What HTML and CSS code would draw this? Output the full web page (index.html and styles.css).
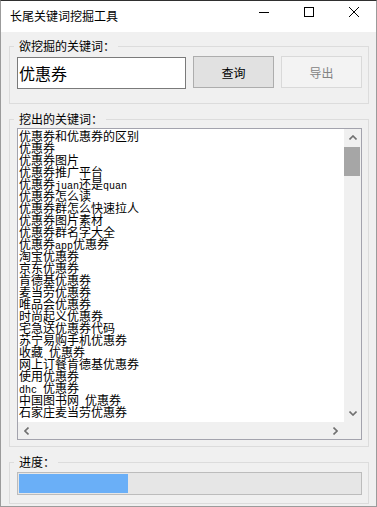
FILE: index.html
```html
<!DOCTYPE html>
<html lang="zh-CN">
<head>
    <meta charset="UTF-8">
    <meta name="viewport" content="width=device-width, initial-scale=1.0">
    <title>长尾关键词挖掘工具</title>
    <link rel="stylesheet" href="styles.css">
</head>
<body>
    <div class="window">
        <div class="titlebar">
            <span class="title">长尾关键词挖掘工具</span>
            <div class="controls">
                <span class="ctl">
                    <svg width="10" height="10" viewBox="0 0 10 10"><path d="M0 5.5 H10" stroke="#000" stroke-width="1"/></svg>
                </span>
                <span class="ctl">
                    <svg width="10" height="10" viewBox="0 0 10 10"><rect x="0.5" y="0.5" width="9" height="9" fill="none" stroke="#000" stroke-width="1"/></svg>
                </span>
                <span class="ctl">
                    <svg width="10" height="10" viewBox="0 0 10 10"><path d="M0 0 L10 10 M10 0 L0 10" stroke="#000" stroke-width="1"/></svg>
                </span>
            </div>
        </div>

        <div class="client">
            <fieldset class="group">
                <legend>欲挖掘的关键词：</legend>
                <div class="search-row">
                    <input class="keyword" type="text" value="优惠券">
                    <button class="btn">查询</button>
                    <button class="btn" disabled>导出</button>
                </div>
            </fieldset>

            <fieldset class="group results">
                <legend>挖出的关键词：</legend>
                <div class="listbox">
                    <div class="list">
                        <div class="item">优惠券和优惠券的区别</div>
                        <div class="item">优惠券</div>
                        <div class="item">优惠券图片</div>
                        <div class="item">优惠券推广平台</div>
                        <div class="item">优惠券<span class="en">juan</span>还是<span class="en">quan</span></div>
                        <div class="item">优惠券怎么读</div>
                        <div class="item">优惠券群怎么快速拉人</div>
                        <div class="item">优惠券图片素材</div>
                        <div class="item">优惠券群名字大全</div>
                        <div class="item">优惠券<span class="en">app</span>优惠券</div>
                        <div class="item">淘宝优惠券</div>
                        <div class="item">京东优惠券</div>
                        <div class="item">肯德基优惠券</div>
                        <div class="item">麦当劳优惠券</div>
                        <div class="item">唯品会优惠券</div>
                        <div class="item">时尚起义优惠券</div>
                        <div class="item">宅急送优惠券代码</div>
                        <div class="item">苏宁易购手机优惠券</div>
                        <div class="item">收藏<span class="en"> </span>优惠券</div>
                        <div class="item">网上订餐肯德基优惠券</div>
                        <div class="item">使用优惠券</div>
                        <div class="item"><span class="en">dhc </span>优惠券</div>
                        <div class="item">中国图书网<span class="en"> </span>优惠券</div>
                        <div class="item">石家庄麦当劳优惠券</div>
                    </div>
                    <div class="vscroll">
                        <span class="arrow">
                            <svg width="8" height="5" viewBox="0 0 8 5"><path d="M0.5 4.5 L4 1 L7.5 4.5" fill="none" stroke="#707070" stroke-width="1.6"/></svg>
                        </span>
                        <div class="thumb"></div>
                        <span class="arrow bottom">
                            <svg width="8" height="5" viewBox="0 0 8 5"><path d="M0.5 0.5 L4 4 L7.5 0.5" fill="none" stroke="#707070" stroke-width="1.6"/></svg>
                        </span>
                    </div>
                    <div class="hscroll">
                        <span class="arrow">
                            <svg width="5" height="8" viewBox="0 0 5 8"><path d="M4.5 0.5 L1 4 L4.5 7.5" fill="none" stroke="#707070" stroke-width="1.6"/></svg>
                        </span>
                        <span class="arrow">
                            <svg width="5" height="8" viewBox="0 0 5 8"><path d="M0.5 0.5 L4 4 L0.5 7.5" fill="none" stroke="#707070" stroke-width="1.6"/></svg>
                        </span>
                    </div>
                    <div class="corner"></div>
                </div>
            </fieldset>

            <fieldset class="group progress-group">
                <legend>进度：</legend>
                <div class="progress">
                    <div class="progress-fill" style="width: 32%"></div>
                </div>
            </fieldset>
        </div>
    </div>
</body>
</html>
```

FILE: styles.css
```css
html, body {
    margin: 0;
    padding: 0;
    background-color: #f0f0f0;
}
body {
    font-family: "Noto Sans CJK SC", sans-serif;
    font-size: 12px;
    color: #000;
}
.window {
    width: 377px;
    height: 507px;
    box-sizing: border-box;
    border: 1px solid #9b9b9b;
    border-top-color: #2f2f2f;
    overflow: hidden;
    background-color: #f0f0f0;
}

/* title bar */
.titlebar {
    height: 31px;
    background-color: #ffffff;
    display: flex;
    justify-content: space-between;
    align-items: flex-start;
}
.title {
    padding: 8px 0 0 9px;
    line-height: 14px;
}
.controls {
    display: flex;
}
.ctl {
    width: 45px;
    height: 31px;
    box-sizing: border-box;
    padding-top: 6px;
    display: flex;
    justify-content: center;
    align-items: flex-start;
}

/* client area */
.client {
    padding: 7px 7px 0 8px;
}
.group {
    margin: 0;
    border: 1px solid #dcdcdc;
    padding: 3px 6px 14px 7px;
    min-width: 0;
}
.group legend {
    margin-left: -3px;
    padding: 0 3px 0 5px;
    line-height: 14px;
}
.results {
    margin-top: 8px;
    padding-top: 2px;
    padding-bottom: 6px;
}
.progress-group {
    margin-top: 8px;
    padding-top: 3px;
    padding-bottom: 8px;
}

/* keyword row */
.search-row {
    display: flex;
    align-items: flex-start;
    gap: 7px;
}
.keyword {
    width: 169px;
    height: 32px;
    margin: 1px 0 0 0;
    box-sizing: border-box;
    border: 1px solid #7a7a7a;
    padding: 0 1px;
    font-family: "Noto Sans CJK SC", sans-serif;
    font-size: 16px;
    color: #000;
    background-color: #fff;
    outline: none;
}
.btn {
    width: 81px;
    height: 32px;
    margin: 0;
    padding: 0;
    box-sizing: border-box;
    border: 1px solid #adadad;
    background-color: #e1e1e1;
    font-family: "Noto Sans CJK SC", sans-serif;
    font-size: 12px;
    color: #000;
}
.btn:disabled {
    background-color: #f3f3f3;
    border-color: #d9d9d9;
    color: #838383;
}

/* list box */
.listbox {
    height: 312px;
    box-sizing: border-box;
    border: 1px solid #a3a3ad;
    background-color: #fff;
    display: grid;
    grid-template-columns: 1fr 17px;
    grid-template-rows: 1fr 17px;
}
.list {
    overflow: hidden;
    padding: 1px 0 0 1px;
    white-space: nowrap;
}
.item {
    height: 12px;
    line-height: 12px;
}
.en {
    font-family: "Liberation Mono", monospace;
    font-size: 10px;
    line-height: 12px;
    white-space: pre;
}
.vscroll {
    background-color: #f0f0f0;
    display: flex;
    flex-direction: column;
}
.vscroll .arrow {
    height: 17px;
    display: flex;
    justify-content: center;
    align-items: center;
}
.vscroll .bottom {
    margin-top: auto;
}
.thumb {
    height: 29px;
    margin: 1px 1px 0 0;
    background-color: #a6a6a6;
}
.hscroll {
    background-color: #f0f0f0;
    display: flex;
    justify-content: space-between;
}
.hscroll .arrow {
    width: 17px;
    display: flex;
    justify-content: center;
    align-items: center;
}
.corner {
    background-color: #f0f0f0;
}

/* progress */
.progress {
    height: 23px;
    box-sizing: border-box;
    border: 1px solid #bcbcbc;
    padding: 1px;
    background-color: #e6e6e6;
}
.progress-fill {
    height: 100%;
    background-color: #6aaff7;
}
```
